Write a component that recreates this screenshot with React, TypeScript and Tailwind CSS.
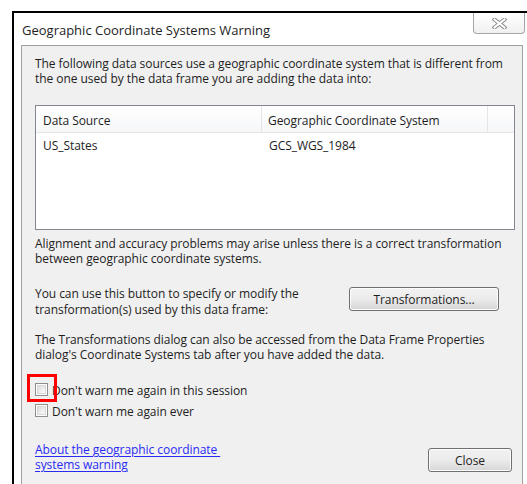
import type { ReactNode } from 'react'

const font = { fontFamily: '"Open Sans", "Noto Sans", sans-serif' }

const Checkbox = () => (
  <span className="box-border flex h-[13px] w-[13px] shrink-0 items-center justify-center border border-[#8e8f8f] bg-white">
    <span className="h-[9px] w-[9px] border border-[#d8d8d8] bg-gradient-to-br from-[#dcdcdc] to-[#fbfbfb]" />
  </span>
)

const WinButton = ({ children, className }: { children: ReactNode; className: string }) => (
  <button
    className={`box-border flex items-center justify-center rounded-[3px] border border-[#707070] bg-gradient-to-b from-[#f2f2f2] via-[#ebebeb] to-[#d6d6d6] text-[12px] text-[#1e1e1e] shadow-[inset_0_0_0_1px_#fcfcfc] ${className}`}
  >
    {children}
  </button>
)

export default function App() {
  return (
    <div className="relative h-[484px] w-[527px] overflow-hidden bg-white" style={font}>
      <div className="ml-[12px] mt-[11px] h-[480px] border-l-2 border-t-2 border-black bg-white">
        {/* title bar */}
        <div className="flex h-[32px] items-start">
          <span className="mt-[8px] pl-[8px] text-[13px] text-[#1e1e1e]">
            Geographic Coordinate Systems Warning
          </span>
          <div className="ml-auto mr-[2px] flex h-[21px] w-[52px] items-center justify-center rounded-b-[4px] border border-t-0 border-[#a6a6a6] bg-gradient-to-b from-white to-[#f0f0f0]">
            <svg width="15" height="11" viewBox="0 0 15 11">
              <path d="M2.5 1.5 L12.5 9.5 M12.5 1.5 L2.5 9.5" stroke="#8a8a8a" strokeWidth="4" strokeLinecap="square" />
              <path d="M2.5 1.5 L12.5 9.5 M12.5 1.5 L2.5 9.5" stroke="#ffffff" strokeWidth="2" strokeLinecap="square" />
            </svg>
          </div>
        </div>

        {/* dialog body */}
        <div className="ml-[7px] h-[460px] w-[502px] border border-b-0 border-[#a0a0a0] bg-[#f0f0f0] pl-[13px] pt-[10px] text-[12px] leading-[15px] tracking-[-0.06px] text-[#1e1e1e]">
          <p className="whitespace-nowrap">
            The following data sources use a geographic coordinate system that is different from
            <br />
            the one used by the data frame you are adding the data into:
          </p>

          {/* list view */}
          <div className="mt-[19px] h-[125px] w-[480px] border border-[#828790] bg-white">
            <div className="flex h-[27px] border-b border-[#e5e5e5] bg-gradient-to-b from-white to-[#f6f7f9]">
              <div className="flex w-[226px] items-center border-r border-[#e5e5e5] pl-[7px] pt-[3px]">Data Source</div>
              <div className="flex w-[226px] items-center border-r border-[#e5e5e5] pl-[6px] pt-[3px]">
                Geographic Coordinate System
              </div>
              <div className="flex-1" />
            </div>
            <div className="flex h-[24px] items-center">
              <div className="w-[226px] pl-[7px]">US_States</div>
              <div className="pl-[7px]">GCS_WGS_1984</div>
            </div>
          </div>

          <p className="mt-[6px] whitespace-nowrap">
            Alignment and accuracy problems may arise unless there is a correct transformation
            <br />
            between geographic coordinate systems.
          </p>

          <div className="mt-[20px] flex w-[480px] items-start">
            <p className="w-[314px] whitespace-nowrap leading-[16px]">
              You can use this button to specify or modify the
              <br />
              transformation(s) used by this data frame:
            </p>
            <WinButton className="mt-[1px] h-[24px] w-[150px]">Transformations...</WinButton>
          </div>

          <p className="mt-[14px] whitespace-nowrap">
            The Transformations dialog can also be accessed from the Data Frame Properties
            <br />
            dialog's Coordinate Systems tab after you have added the data.
          </p>

          {/* checkboxes */}
          <div className="mt-[19px] flex flex-col gap-[4px]">
            <label className="relative flex items-center gap-[4px]">
              <Checkbox />
              <span className="mt-[2px]">Don't warn me again in this session</span>
              <span className="absolute left-[-8px] top-[-7px] h-[28px] w-[30px] border-[3px] border-[#ff0000]" />
            </label>
            <label className="flex items-center gap-[4px]">
              <Checkbox />
              <span className="mt-[2px]">Don't warn me again ever</span>
            </label>
          </div>

          <div className="mt-[23px] flex w-[480px] items-end justify-between">
            <a href="#" className="whitespace-nowrap text-[#2a2af5] underline underline-offset-[2px]">
              About the geographic coordinate&nbsp;
              <br />
              systems warning
            </a>
            <WinButton className="mr-[3px] h-[24px] w-[84px]">Close</WinButton>
          </div>
        </div>
      </div>
    </div>
  )
}
